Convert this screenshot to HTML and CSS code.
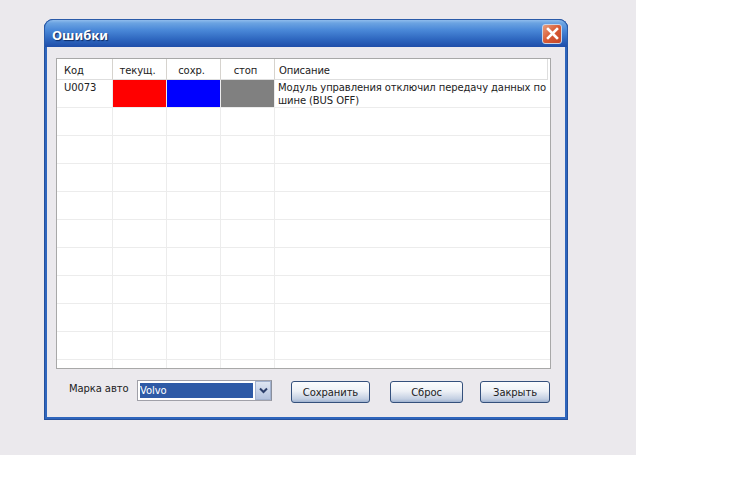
FILE: index.html
```html
<!DOCTYPE html>
<html lang="ru">
<head>
<meta charset="utf-8">
<title>Ошибки</title>
<link rel="stylesheet" href="styles.css">
</head>
<body>
<div class="desktop">
  <div class="window">
    <div class="titlebar">
      <span class="title">Ошибки</span>
      <span class="close"><svg width="13" height="13" viewBox="0 0 13 13"><path d="M2 2 L11 11 M11 2 L2 11" stroke="#fff" stroke-width="2.6" stroke-linecap="square" fill="none"/></svg></span>
    </div>
    <div class="client">
      <div class="grid">
        <div class="cell head">Код</div><div class="cell head center">текущ.</div><div class="cell head center">сохр.</div><div class="cell head center">стоп</div><div class="cell head last">Описание</div>
        <div class="cell tall">U0073</div><div class="cell tall swatch"><span class="fill red"></span></div><div class="cell tall swatch"><span class="fill blue"></span></div><div class="cell tall swatch"><span class="fill gray"></span></div><div class="cell tall desc">Модуль управления отключил передачу данных по шине (BUS OFF)</div>
        <div class="cell"></div><div class="cell"></div><div class="cell"></div><div class="cell"></div><div class="cell"></div>
        <div class="cell"></div><div class="cell"></div><div class="cell"></div><div class="cell"></div><div class="cell"></div>
        <div class="cell"></div><div class="cell"></div><div class="cell"></div><div class="cell"></div><div class="cell"></div>
        <div class="cell"></div><div class="cell"></div><div class="cell"></div><div class="cell"></div><div class="cell"></div>
        <div class="cell"></div><div class="cell"></div><div class="cell"></div><div class="cell"></div><div class="cell"></div>
        <div class="cell"></div><div class="cell"></div><div class="cell"></div><div class="cell"></div><div class="cell"></div>
        <div class="cell"></div><div class="cell"></div><div class="cell"></div><div class="cell"></div><div class="cell"></div>
        <div class="cell"></div><div class="cell"></div><div class="cell"></div><div class="cell"></div><div class="cell"></div>
        <div class="cell"></div><div class="cell"></div><div class="cell"></div><div class="cell"></div><div class="cell"></div>
        <div class="cell stub"></div><div class="cell stub"></div><div class="cell stub"></div><div class="cell stub"></div><div class="cell stub"></div>
      </div>
      <div class="footer">
        <span class="label">Марка авто</span>
        <div class="combo">
          <span class="combo-value">Volvo</span>
          <span class="combo-arrow"><svg width="9" height="7" viewBox="0 0 9 7"><path d="M1 1.5 L4.5 5 L8 1.5" stroke="#2c3f6b" stroke-width="2" fill="none"/></svg></span>
        </div>
        <button class="btn save">Сохранить</button>
        <button class="btn reset">Сброс</button>
        <button class="btn closebtn">Закрыть</button>
      </div>
    </div>
  </div>
</div>
</body>
</html>
```
FILE: styles.css
```css
* { box-sizing: border-box; }
html, body { margin: 0; padding: 0; background: #fff; }
body { font-family: "DejaVu Sans", Verdana, sans-serif; font-size: 10px; letter-spacing: -0.1px; color: #222; }

.desktop {
  width: 636px;
  height: 455px;
  background: #ebe9ed;
  padding: 19px 0 0 44px;
}
.window {
  width: 524px;
  height: 401px;
  display: flex;
  flex-direction: column;
  border-radius: 9px 9px 0 0;
  background: #2f66bd;
  box-shadow: inset 0 0 0 1px #24509c;
}
.titlebar {
  height: 28px;
  flex: none;
  display: flex;
  align-items: center;
  justify-content: space-between;
  padding: 2px 5px 0 7px;
  border-radius: 9px 9px 0 0;
  border: 1px solid #2a5aa8;
  border-bottom: 0;
  background: linear-gradient(#8fbcec 0, #6ba3e2 3px, #4a88d8 10px, #2f68c0 19px, #1d4aa6 28px);
}
.title {
  font-family: "Noto Sans", sans-serif;
  font-size: 13px;
  font-weight: 700;
  letter-spacing: 0;
  color: #fff;
  text-shadow: 1px 1px 1px #0d2a63;
}
.close {
  width: 20px;
  height: 20px;
  margin-top: -2px;
  display: flex;
  align-items: center;
  justify-content: center;
  border: 1px solid #c9d3e6;
  border-radius: 3px;
  background: linear-gradient(135deg, #e8a080, #d85a34 50%, #c4472a);
}
.client {
  flex: 1;
  margin: 0 3px 3px 3px;
  background: #ebe9ed;
  padding: 11px 14px 0 9px;
  display: flex;
  flex-direction: column;
}
.grid {
  width: 495px;
  height: 311px;
  flex: none;
  border: 1px solid #a8a8a8;
  background: #fff;
  display: grid;
  grid-template-columns: 56px 54px 54px 54px 1fr;
  grid-template-rows: 21px 28px repeat(9, 28px) 9px;
  overflow: hidden;
}
.cell {
  border-right: 1px solid #ececec;
  border-bottom: 1px solid #ececec;
  padding: 0 0 0 7px;
}
.cell:nth-child(5n) { border-right: 0; }
.head {
  border-right-color: #d6d3ce;
  border-bottom: 1px solid #dedede;
  line-height: 21px;
  padding-top: 1px;
}
.head.center { text-align: center; padding: 1px 4px 0 0; }
.head.last { margin-right: 2px; border-right: 1px solid #dedede; padding-left: 4px; }
.tall { line-height: 13px; padding-top: 1px; }
.swatch { padding: 0; }
.fill { display: block; width: 100%; height: 27px; }
.red { background: #ff0000; }
.blue { background: #0000ff; }
.gray { background: #808080; }
.desc { padding: 1px 2px 0 3px; }
.stub { border-bottom: 0; }

.footer {
  display: flex;
  align-items: flex-start;
  margin-top: 11px;
}
.label { width: 68px; margin-left: 13px; padding-top: 3px; flex: none; }
.combo {
  width: 135px;
  height: 21px;
  flex: none;
  display: flex;
  border: 1px solid #a0a0a8;
  border-right-color: #8a8f9c;
  background: #fff;
  padding: 2px;
}
.combo-value {
  flex: 1;
  background: #2e5aa6;
  color: #fff;
  line-height: 16px;
}
.combo-arrow {
  width: 16px;
  margin: -2px -2px -2px 2px;
  display: flex;
  align-items: center;
  justify-content: center;
  background: linear-gradient(#dfe6f2, #b3c2de);
  border: 1px solid #a2b2cf;
}
.btn {
  height: 22px;
  margin-top: 1px;
  padding: 0;
  flex: none;
  font: 10px "DejaVu Sans", Verdana, sans-serif;
  letter-spacing: -0.1px;
  color: #222;
  border: 1px solid #34507c;
  border-radius: 3px;
  background: linear-gradient(#fbfcfd 0, #eef1f6 45%, #c3cfe2 85%, #9fb2d0 100%);
}
.save { width: 79px; margin-left: 19px; }
.reset { width: 73px; margin-left: 20px; }
.closebtn { width: 70px; margin-left: 17px; }
```
